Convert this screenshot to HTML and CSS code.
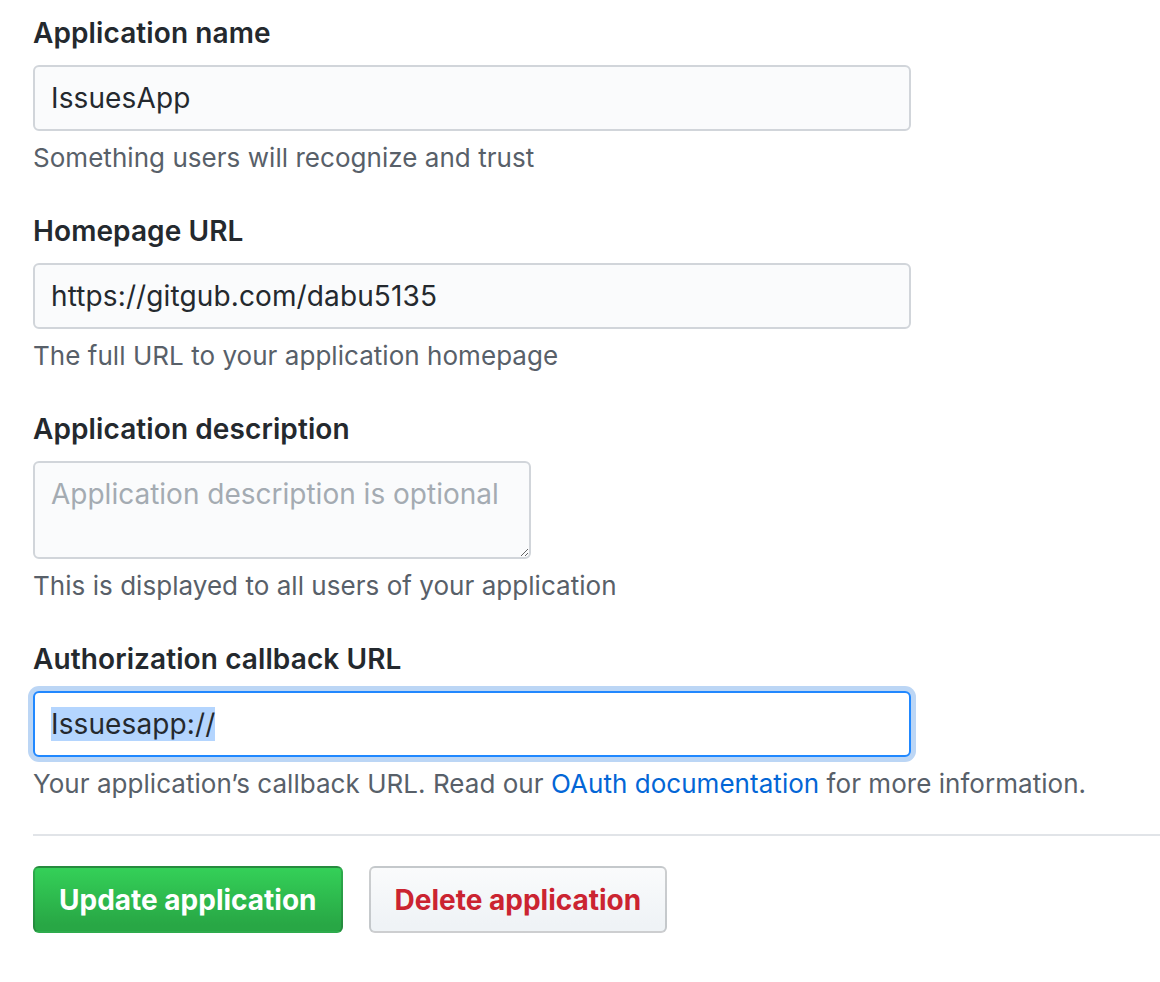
FILE: index.html
```html
<!DOCTYPE html>
<html>
<head>
<meta charset="utf-8">
<link rel="stylesheet" href="styles.css">
</head>
<body>
<form class="form">
  <div class="group">
    <label class="label">Application name</label>
    <input class="control" type="text" value="IssuesApp" readonly>
    <p class="note">Something users will recognize and trust</p>
  </div>
  <div class="group">
    <label class="label">Homepage URL</label>
    <input class="control" type="text" value="https://gitgub.com/dabu5135" readonly>
    <p class="note">The full URL to your application homepage</p>
  </div>
  <div class="group">
    <label class="label">Application description</label>
    <textarea class="control area" placeholder="Application description is optional" readonly></textarea>
    <p class="note">This is displayed to all users of your application</p>
  </div>
  <div class="group">
    <label class="label">Authorization callback URL</label>
    <div class="control focused"><span class="sel">Issuesapp://</span></div>
    <p class="note">Your application’s callback URL. Read our <a class="link" href="#">OAuth documentation</a> for more information.</p>
  </div>
  <hr class="rule">
  <div class="actions">
    <button type="button" class="btn btn-primary">Update application</button>
    <button type="button" class="btn btn-danger">Delete application</button>
  </div>
</form>
</body>
</html>
```
FILE: styles.css
```css
html, body {
  margin: 0;
  padding: 0;
  background: #fff;
}
body {
  font-family: Inter, "Liberation Sans", Arial, sans-serif;
  color: #24292e;
  padding: 13px 0 0 33px;
}
.form {
  display: flex;
  flex-direction: column;
}
.group {
  display: flex;
  flex-direction: column;
  align-items: flex-start;
  margin-bottom: 35px;
}
.label {
  font-size: 28px;
  font-weight: 600;
  line-height: 40px;
  margin-bottom: 12px;
  color: #24292e;
  letter-spacing: 0.1px;
}
.control {
  box-sizing: border-box;
  width: 878px;
  height: 66px;
  padding: 0 16px;
  font-family: Inter, "Liberation Sans", Arial, sans-serif;
  font-size: 28px;
  line-height: 34px;
  letter-spacing: 0.12px;
  color: #24292e;
  background: #fafbfc;
  border: 2px solid #d1d5da;
  border-radius: 6px;
  outline: none;
  margin: 0;
}
.area {
  width: 498px;
  height: 98px;
  padding: 14px 16px;
  resize: vertical;
  letter-spacing: 0;
}
.area::placeholder {
  color: #a4abb2;
}
.focused {
  display: flex;
  align-items: center;
  background: #fff;
  border-color: #2188ff;
  box-shadow: 0 0 0 5px #bcd6f5;
}
.sel {
  background: #b4d5fe;
  line-height: 34px;
}
.note {
  margin: 9px 0 0 0;
  font-size: 26px;
  line-height: 36px;
  color: #586069;
  white-space: nowrap;
  letter-spacing: 0.04px;
}
.link {
  color: #0366d6;
  text-decoration: none;
}
.rule {
  margin: -3px 0 30px 0;
  border: 0;
  height: 2px;
  background: #e1e4e8;
}
.actions {
  display: flex;
  gap: 26px;
}
.btn {
  box-sizing: border-box;
  height: 67px;
  padding: 0 24px;
  font-family: Inter, "Liberation Sans", Arial, sans-serif;
  font-size: 28px;
  font-weight: 700;
  line-height: 40px;
  border: 2px solid rgba(27, 31, 35, 0.2);
  border-radius: 6px;
  cursor: pointer;
}
.btn-primary {
  color: #fff;
  background-image: linear-gradient(-180deg, #34d058 0%, #28a745 90%);
}
.btn-danger {
  color: #cb2431;
  background-image: linear-gradient(-180deg, #fafbfc 0%, #eff3f6 90%);
}
```
